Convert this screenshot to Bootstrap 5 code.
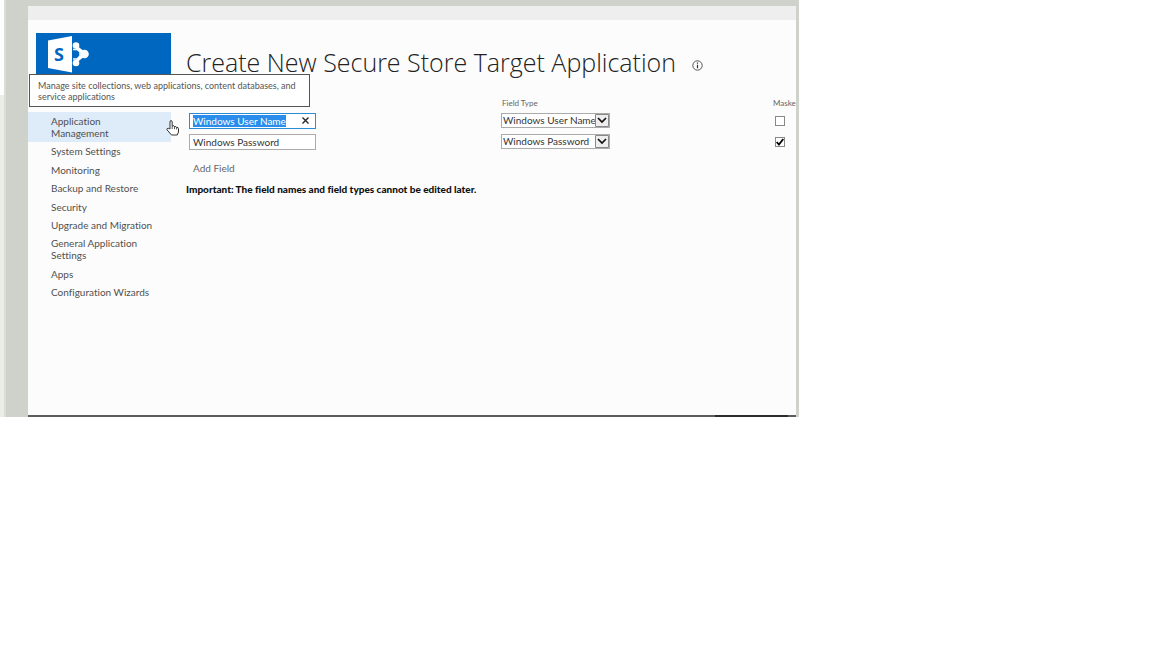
<!DOCTYPE html>
<html lang="en">
<head>
<meta charset="utf-8">
<meta name="viewport" content="width=device-width, initial-scale=1">
<title>Create New Secure Store Target Application</title>
<link href="https://cdn.jsdelivr.net/npm/bootstrap@5.3.0/dist/css/bootstrap.min.css" rel="stylesheet">
<style>
body{font-family:Lato,"Open Sans",sans-serif;font-size:10px;line-height:12px;font-variant-ligatures:none;color:#444;background:#fff}
.desktop{max-width:799px;background:#cfd2cb;padding:6px 3px 0 0}
.edge{width:6px;margin:-6px 22px 0 0;border-right:2px solid #dbded7;background:linear-gradient(#fff 95px,#ecede8 95px)}
.window{background:#fcfcfc;min-width:0;min-height:411px}
.ribbon{height:14px;background:#eee}
.side{width:143px;padding-top:13px}
.brand{height:42px;margin-left:8px;background:#0067c0}
.side-nav{margin-top:37px;min-height:189px}
.side-nav a{display:block;padding:3px 30px 3px 23px;color:#505050;text-decoration:none}
.side-nav a.current{background:#deebf8}
.main{min-width:0;overflow:hidden;padding:26px 0 0 15px}
.title{font-family:"Open Sans","Noto Sans",sans-serif;font-size:25px;line-height:32px;font-weight:300;color:#222}
.info{width:11px;height:11px;margin-top:6px}
.fields{width:640px;table-layout:fixed;margin-top:17px}
.fields th{height:15px;padding:0 0 0 1px;font-size:8px;font-weight:400;color:#666}
.fields td{height:21px;padding:0 0 0 3px;vertical-align:middle}
.fields td+td{padding-left:0}
.fields .c-name{width:315px}
.fields .c-type{width:271px}
.field{width:127px}
.field input,.pick{display:block;width:100%;height:16px;padding:0 3px;border:1px solid #ababab;border-radius:0;background-color:#fff;font-size:10px;line-height:14px;color:#333;outline:0}
.field input:focus{border-color:#2a8dd4}
.field input::selection{background:#2a8dec;color:#fff}
.clear{top:3px;right:6px;width:10px;height:10px;padding:0;border:0;background:#fff;line-height:0}
.clear svg{width:7px;height:7px}
.pick{width:109px;height:15px;padding:0 14px 0 1px;line-height:13px;-webkit-appearance:none;appearance:none;background:#fff url("data:image/svg+xml,%3Csvg xmlns='http://www.w3.org/2000/svg' width='14' height='13'%3E%3Cpath d='M.5.5h13v12H.5z' fill='%23eee' stroke='%23888'/%3E%3Cpath d='M3 4l4 4 4-4' fill='none' stroke='%23111' stroke-width='1.7'/%3E%3C/svg%3E") right center no-repeat}
.tick{display:block;width:10px;height:10px;margin:0 0 0 3px;-webkit-appearance:none;appearance:none;border:1px solid #888;background:#fff}
.tick:checked{background:#fff url("data:image/svg+xml,%3Csvg xmlns='http://www.w3.org/2000/svg' viewBox='0 0 8 8'%3E%3Cpath d='M.7 4l2.2 2.5L7.3 1' fill='none' stroke='%23000' stroke-width='1.8'/%3E%3C/svg%3E")}
.add{display:inline-block;margin:10px 0 0 7px;color:#666;text-decoration:none}
.note{margin:9px 0 0;font-weight:900;color:#111}
.tip{left:1px;top:68px;width:281px;padding:5px 8px 4px 8px;border:1px solid #555;background:#fff;font-size:9px;line-height:11px;color:#555}
.hand{left:138px;top:114px;width:14px;height:16px}
.taskbar{height:2px;padding-right:8px;background:#5c5c59}
.taskbar span{width:73px;background:#2c2c2b}
</style>
</head>
<body>
<div class="desktop d-flex">
  <div class="edge flex-shrink-0"></div>
  <div class="window flex-grow-1 d-flex flex-column position-relative">
    <div class="ribbon"></div>
    <div class="d-flex flex-grow-1">
      <aside class="side flex-shrink-0">
        <div class="brand">
          <svg width="60" height="42" viewBox="0 0 60 42" role="img" aria-label="SharePoint">
            <path d="M39 13 49 21 39 29" fill="none" stroke="#fff" stroke-width="3"/>
            <g fill="#fff"><circle cx="40" cy="12.500" r="3.300"/><circle cx="48.500" cy="21" r="4.300"/><circle cx="40" cy="30" r="3.300"/></g>
            <path d="M37 16h3l4 3v4l-4 4h-3z" fill="#0067c0"/>
            <path d="M37 16.500h4l3 2.500v4l-3 3h-4" fill="none" stroke="#fff" stroke-width="1.500"/>
            <path d="M12 7.500 36 3v36.500L12 35z" fill="#fff"/>
            <text x="18" y="28" font-family="Open Sans" font-size="18" font-weight="700" fill="#0067c0">S</text>
          </svg>
        </div>
        <nav class="side-nav d-flex flex-column justify-content-between" aria-label="Central Administration">
          <a class="current" href="#">Application Management</a>
          <a href="#">System Settings</a>
          <a href="#">Monitoring</a>
          <a class="text-nowrap" href="#">Backup and Restore</a>
          <a href="#">Security</a>
          <a class="text-nowrap" href="#">Upgrade and Migration</a>
          <a href="#">General Application Settings</a>
          <a href="#">Apps</a>
          <a class="text-nowrap" href="#">Configuration Wizards</a>
        </nav>
      </aside>
      <main class="main flex-grow-1">
        <div class="d-flex align-items-center gap-3">
          <h1 class="title text-nowrap mb-0">Create New Secure Store Target Application</h1>
          <svg class="info" viewBox="0 0 11 11" aria-hidden="true"><circle cx="5.500" cy="5.500" r="4.700" fill="none" stroke="#555"/><path d="M5.500 2.500v1.200M5.500 4.700v3.600" fill="none" stroke="#333" stroke-width="1.200"/></svg>
        </div>
        <table class="fields">
          <thead><tr><th class="c-name"></th><th class="c-type">Field Type</th><th>Maske</th></tr></thead>
          <tbody>
            <tr>
              <td><div class="field position-relative"><input id="name1" type="text" value="Windows User Name" aria-label="Field 1 name" autofocus><button class="clear position-absolute" type="button" aria-label="Clear"><svg viewBox="0 0 7 7"><path d="M.5.5l6 6m0-6l-6 6" stroke="#222" stroke-width="1.300"/></svg></button></div></td>
              <td><select class="pick" aria-label="Field 1 type"><option>Windows User Name</option><option>Windows Password</option></select></td>
              <td><input class="tick" type="checkbox" aria-label="Field 1 masked"></td>
            </tr>
            <tr>
              <td><div class="field"><input type="text" value="Windows Password" aria-label="Field 2 name"></div></td>
              <td><select class="pick" aria-label="Field 2 type"><option>Windows Password</option><option>Windows User Name</option></select></td>
              <td><input class="tick" type="checkbox" aria-label="Field 2 masked" checked></td>
            </tr>
          </tbody>
        </table>
        <a class="add" href="#">Add Field</a>
        <p class="note">Important: The field names and field types cannot be edited later.</p>
      </main>
    </div>
    <div class="taskbar d-flex justify-content-end"><span></span></div>
    <div class="tip position-absolute" role="tooltip">Manage site collections, web applications, content databases, and service applications</div>
    <svg class="hand position-absolute" viewBox="0 0 14 16" aria-hidden="true"><path d="M4 9V2q0-1.500 1-1.500T6.200 2v4q2-1 2.300.7 1.800-.7 2 .8 2-.5 2 1.200V12l-1.300 3H5.500L1 9.800Q.7 8 2.300 8.300z" fill="#fff" stroke="#333"/><path d="M6.200 6v3M8.500 6.500v2.700M10.600 7.500v2" stroke="#333" stroke-width=".8"/></svg>
  </div>
</div>
<script src="https://cdn.jsdelivr.net/npm/bootstrap@5.3.0/dist/js/bootstrap.bundle.min.js"></script>
<script>
const first = document.getElementById('name1');
first.focus();
first.select();
</script>
</body>
</html>
